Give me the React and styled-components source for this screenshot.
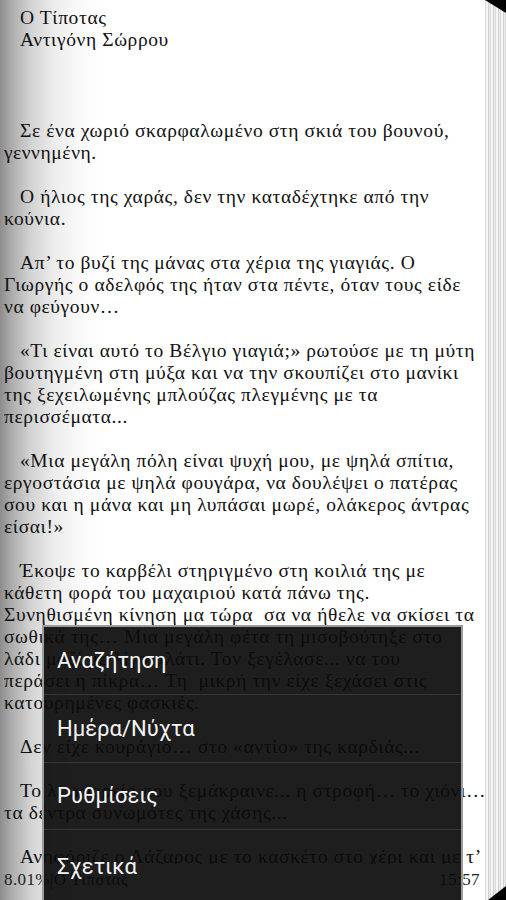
import React from 'react';
import styled, { createGlobalStyle } from 'styled-components';

const Global = createGlobalStyle`
  html, body {
    margin: 0;
    padding: 0;
    background: #fff;
  }
`;

const Screen = styled.div`
  position: relative;
  width: 506px;
  height: 900px;
  overflow: hidden;
  display: flex;
  flex-direction: column;
  background:
    linear-gradient(90deg, #8c8c8c 0px, #a9a9a9 10px, #d2d2d2 30px, #ededed 55px, #fafafa 80px, rgba(255,255,255,0) 100px),
    repeating-linear-gradient(90deg, #dadada 0px, #dadada 1px, #f6f6f6 1px, #f6f6f6 3px, #cfcfcf 3px, #cfcfcf 4px, #ececec 4px, #ececec 5px) 485px 0 / 21px 100% no-repeat,
    #fff;
`;

const Corner = styled.svg`
  position: absolute;
  right: 0;
  width: 21px;
  ${({ bottom }) => (bottom ? 'bottom: 0;' : 'top: 0;')}
`;

const Reader = styled.div`
  flex: 1;
  overflow: hidden;
  padding: 7px 0 0 4px;
  font-family: "Liberation Serif", "Times New Roman", serif;
  font-size: 19.5px;
  letter-spacing: 0.6px;
  line-height: 22px;
  color: #111;
`;

const Title = styled.div`
  padding-left: 16px;
  margin-bottom: 69px;
`;

const Para = styled.div`
  margin-bottom: 22px;
`;

const Line = styled.div`
  white-space: nowrap;
  padding-left: ${({ first }) => (first ? '16px' : '0')};
`;

const Footer = styled.div`
  height: 32px;
  display: flex;
  justify-content: space-between;
  align-items: center;
  padding: 0 26px 4px 4px;
  font-family: "Liberation Serif", "Times New Roman", serif;
  font-size: 17px;
  letter-spacing: 0.4px;
  color: #222;
`;

const Menu = styled.div`
  position: absolute;
  left: 42px;
  top: 625px;
  width: 417px;
  bottom: 0;
  border: 2px solid #9c9c9c;
  border-bottom: none;
  background: rgba(11, 11, 11, 0.92);
  display: flex;
  flex-direction: column;
`;

const Item = styled.div`
  height: 67px;
  display: flex;
  align-items: center;
  padding-left: 13px;
  padding-top: ${({ last }) => (last ? '3px' : '0')};
  border-bottom: ${({ last }) => (last ? 'none' : '1px solid #363636')};
  font-family: Roboto, "Noto Sans", sans-serif;
  font-size: 22px;
  color: #f4f4f4;
`;

const paragraphs = [
  ['Σε ένα χωριό σκαρφαλωμένο στη σκιά του βουνού,', 'γεννημένη.'],
  ['Ο ήλιος της χαράς, δεν την καταδέχτηκε από την', 'κούνια.'],
  [
    'Απ’ το βυζί της μάνας στα χέρια της γιαγιάς. Ο',
    'Γιωργής ο αδελφός της ήταν στα πέντε, όταν τους είδε',
    'να φεύγουν…',
  ],
  [
    '«Τι είναι αυτό το Βέλγιο γιαγιά;» ρωτούσε με τη μύτη',
    'βουτηγμένη στη μύξα και να την σκουπίζει στο μανίκι',
    'της ξεχειλωμένης μπλούζας πλεγμένης με τα',
    'περισσέματα...',
  ],
  [
    '«Μια μεγάλη πόλη είναι ψυχή μου, με ψηλά σπίτια,',
    'εργοστάσια με ψηλά φουγάρα, να δουλέψει ο πατέρας',
    'σου και η μάνα και μη λυπάσαι μωρέ, ολάκερος άντρας',
    'είσαι!»',
  ],
  [
    'Έκοψε το καρβέλι στηριγμένο στη κοιλιά της με',
    'κάθετη φορά του μαχαιριού κατά πάνω της.',
    'Συνηθισμένη κίνηση μα τώρα\u00a0 σα να ήθελε να σκίσει τα',
    'σωθικά της… Μια μεγάλη φέτα τη μισοβούτηξε στο',
    'λάδι μαζί με λίγο αλάτι. Τον ξεγέλασε... να του',
    'περάσει η πίκρα… Τη\u00a0 μικρή την είχε ξεχάσει στις',
    'κατουρημένες φασκιές.',
  ],
  ['Δεν είχε κουράγιο… στο «αντίο» της καρδιάς...'],
  [
    'Το λεωφορείο που ξεμάκραινε... η στροφή… το χιόνι…',
    'τα δέντρα συνωμότες της χάσης...',
  ],
  ['Ανηφόριζε ο Λάζαρος με το κασκέτο στο χέρι και με τ’'],
];

const menuItems = ['Αναζήτηση', 'Ημέρα/Νύχτα', 'Ρυθμίσεις', 'Σχετικά'];

export default function App() {
  return (
    <Screen>
      <Global />
      <Reader>
        <Title>
          <Line>Ο Τίποτας</Line>
          <Line>Αντιγόνη Σώρρου</Line>
        </Title>
        {paragraphs.map((lines, i) => (
          <Para key={i}>
            {lines.map((l, j) => (
              <Line key={j} first={j === 0}>
                {l}
              </Line>
            ))}
          </Para>
        ))}
      </Reader>
      <Footer>
        <span>8.01%|Ο Τίποτας</span>
        <span>15:57</span>
      </Footer>
      <Corner height="14" viewBox="0 0 21 14">
        <polygon points="0,0 21,0 21,13" fill="#000" />
      </Corner>
      <Corner bottom height="15" viewBox="0 0 21 15">
        <polygon points="3,15 21,15 21,1" fill="#000" />
      </Corner>
      <Menu>
        {menuItems.map((m, i) => (
          <Item key={m} last={i === menuItems.length - 1}>
            {m}
          </Item>
        ))}
      </Menu>
    </Screen>
  );
}
